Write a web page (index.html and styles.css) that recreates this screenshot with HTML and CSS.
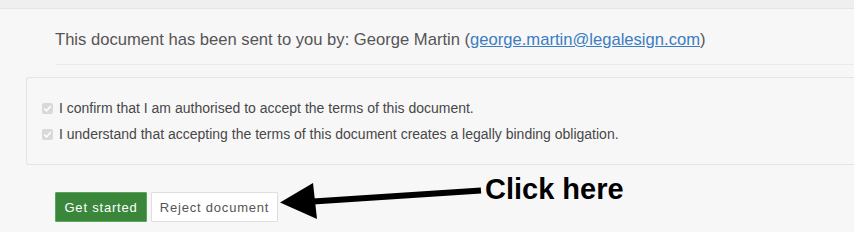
FILE: index.html
```html
<!DOCTYPE html>
<html lang="en">
<head>
    <meta charset="UTF-8">
    <meta name="viewport" content="width=device-width, initial-scale=1.0">
    <title>Review document</title>
    <link rel="stylesheet" href="styles.css">
</head>
<body>
    <div class="topbar"></div>
    <div class="sender">
        This document has been sent to you by: George Martin (<a href="#">george.martin@legalesign.com</a>)
    </div>
    <div class="terms">
        <label class="term">
            <span class="tick"><svg width="11" height="11" viewBox="0 0 11 11"><path d="M2.3 5.6 L4.6 7.9 L8.8 2.9" fill="none" stroke="#fff" stroke-width="1.6"/></svg></span>
            I confirm that I am authorised to accept the terms of this document.
        </label>
        <label class="term">
            <span class="tick"><svg width="11" height="11" viewBox="0 0 11 11"><path d="M2.3 5.6 L4.6 7.9 L8.8 2.9" fill="none" stroke="#fff" stroke-width="1.6"/></svg></span>
            I understand that accepting the terms of this document creates a legally binding obligation.
        </label>
    </div>
    <div class="actions">
        <button class="btn btn-start">Get started</button>
        <button class="btn btn-reject">Reject document</button>
        <svg class="arrow" width="204" height="44" viewBox="0 0 204 44">
            <line x1="34" y1="21.5" x2="202" y2="10.5" stroke="#000" stroke-width="6"/>
            <polygon points="1,22.5 34,3 38,39" fill="#000"/>
        </svg>
        <span class="callout">Click here</span>
    </div>
</body>
</html>
```

FILE: styles.css
```css
body {
    margin: 0;
    background: #f8f7f8;
    font-family: "Liberation Sans", Arial, sans-serif;
    color: #555;
    overflow: hidden;
}

.topbar {
    height: 8px;
    background: #efefef;
    border-bottom: 1px solid #e5e5e5;
}

.sender {
    margin-left: 55px;
    padding: 21px 0 14px;
    font-size: 16.6px;
    line-height: 20px;
    border-bottom: 1px solid #ebebeb;
    white-space: nowrap;
}

.sender a {
    color: #3a7dc0;
}

.terms {
    margin: 12px 0 0 26px;
    padding: 17px 0;
    border: 1px solid #e4e4e4;
    border-right: 0;
    border-radius: 3px 0 0 3px;
}

.term {
    display: flex;
    align-items: center;
    height: 26px;
    padding-left: 15px;
    font-size: 14px;
    color: #474747;
    white-space: nowrap;
}

.tick {
    display: inline-flex;
    width: 11px;
    height: 11px;
    margin-right: 6px;
    background: #d9d9d9;
    border-radius: 2px;
}

.actions {
    display: flex;
    align-items: flex-start;
    margin: 5px 0 0 55px;
}

.btn {
    margin-top: 22px;
    height: 30px;
    padding: 0;
    font-family: "Liberation Sans", Arial, sans-serif;
    font-size: 13px;
    letter-spacing: 0.8px;
    border-radius: 1px;
}

.btn-start {
    width: 92px;
    background: #3a873c;
    border: 1px solid #5aa65a;
    color: #fff;
}

.btn-reject {
    width: 127px;
    margin-left: 4px;
    background: #fff;
    border: 1px solid #dedede;
    color: #555;
}

.arrow {
    margin: 10px 0 0 1px;
}

.callout {
    margin: 2px 0 0 2px;
    font-size: 29px;
    line-height: 34px;
    font-weight: bold;
    color: #000;
}
```
